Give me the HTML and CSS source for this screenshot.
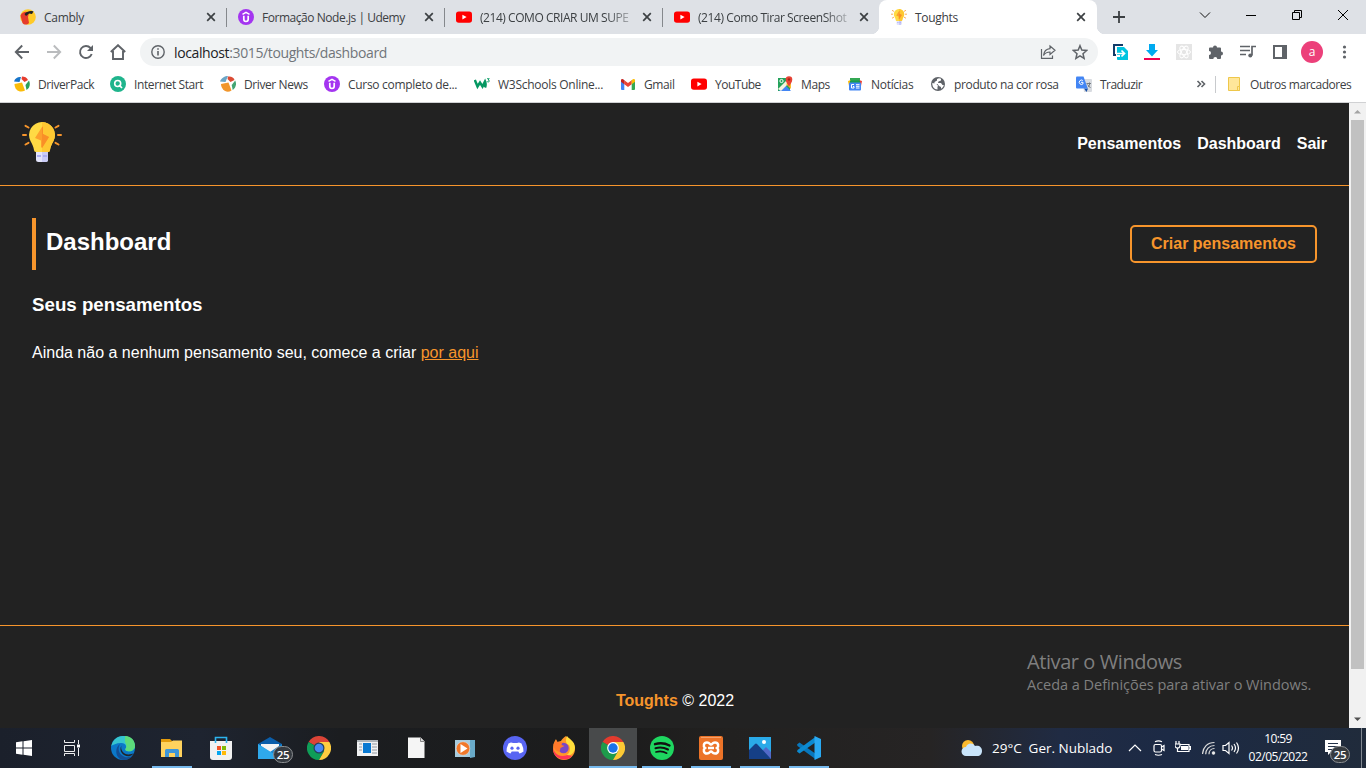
FILE: index.html
```html
<!DOCTYPE html>
<html lang="pt">
<head>
<meta charset="utf-8">
<title>Toughts</title>
<link rel="stylesheet" href="styles.css">
</head>
<body>
<svg class="defs" aria-hidden="true">
  <symbol id="x" viewBox="0 0 10 10"><path d="M1.200 1.200l7.600 7.600M8.800 1.200L1.200 8.800" stroke="#3c4043" stroke-width="1.700" fill="none"/></symbol>
  <symbol id="udemy" viewBox="0 0 16 16"><circle cx="8" cy="8" r="8" fill="#a435f0"/><path d="M4.500 5.300L8 3.300l3.500 2" fill="none" stroke="#fff" stroke-width="1.500"/><path d="M5.800 6.800v3.500a2.200 2.200 0 0 0 4.400 0V6.800" fill="none" stroke="#fff" stroke-width="1.700"/></symbol>
  <symbol id="yt" viewBox="0 0 16 16"><rect y="2.400" width="16" height="11.400" rx="2.800" fill="#f00"/><path d="M6.400 5.700v4.800l4.200-2.400z" fill="#fff"/></symbol>
  <symbol id="bulb" viewBox="0 0 40 40"><g stroke="#f7952c" stroke-width="2" stroke-linecap="round"><path d="M3.500 3.800l3 1.700M1 13h3M3.500 22.500l3-1.700M36.500 3.800l-3 1.700M39 13h-3M36.500 22.500l-3-1.700"/></g><path d="M20 0A12.900 13 0 0 0 8.500 19c2 3.500 3 6 3.500 9q0 2 2 2h12q2 0 2-2c.5-3 1.500-5.500 3.500-9A12.900 13 0 0 0 20 0z" fill="#ffda44"/><path d="M20 0v30h6q2 0 2-2c.5-3 1.500-5.500 3.500-9A12.900 13 0 0 0 20 0z" fill="#fec832"/><path d="M20 5l-7 11 6 2.500V25l1 1 7-11-6-3V5z" fill="#fda02c"/><path d="M20 5v21l7-11-6-3V4.500z" fill="#f98f27"/><path d="M14 30h12v7.500a2.500 2.500 0 0 1-2.500 2.500h-7a2.500 2.500 0 0 1-2.500-2.500z" fill="#e3e4fb"/><path d="M20 30h6v7.500a2.500 2.500 0 0 1-2.500 2.500H20z" fill="#c9cbf6"/><path d="M15 34h4M21 34h4" stroke="#acaef0" stroke-width="2"/></symbol>
  <symbol id="chrome" viewBox="0 0 24 24"><path d="M12 12L1.600 6A12 12 0 0 1 22.400 6z" fill="#e33b2e"/><path d="M12 12l5.200 3L12 24A12 12 0 0 1 1.600 6z" fill="#1e9b4b"/><path d="M12 6h10.400A12 12 0 0 1 12 24l5.200-9z" fill="#fcc934"/><circle cx="12" cy="12" r="5.900" fill="#fff"/><circle cx="12" cy="12" r="4.700" fill="#1a73e8"/></symbol>
  <symbol id="chrome-profile" viewBox="0 0 24 24"><path d="M12 12L1.600 6A12 12 0 0 1 22.400 6z" fill="#db4437"/><path d="M12 12l5.200 3L12 24A12 12 0 0 1 1.600 6z" fill="#0f9d58"/><path d="M12 6h10.400A12 12 0 0 1 12 24l5.200-9z" fill="#ffcd40"/><circle cx="12" cy="12" r="5.500" fill="#25405c"/><circle cx="12" cy="12" r="4.300" fill="#4687f4"/></symbol>
  <symbol id="pack" viewBox="0 0 16 16"><path d="M0 5.500C1 2 4 .5 7 1L5.500 6z" fill="#1875c9"/><path d="M8 .5c2.500 0 5 1 6 3.500L10.500 6 7.500 3z" fill="#e63c2e"/><path d="M15 4.500c1.500 3 1 7.500-2.500 9.500L11.500 9z" fill="#2ba05a"/><path d="M.5 8l7.500-1.500 3 8C6 17.500.5 14 .5 8z" fill="#fbbc09"/></symbol>
</svg>

<div class="screen">
  <header class="browser">
    <div class="tabs">
      <div class="tab">
        <svg class="fav" viewBox="0 0 16 16"><circle cx="8" cy="8" r="7.800" fill="#ffca28"/><path d="M.5 6.500c2-4 6-4.500 8.500-2.500l-1 4 1 6c-2 2-5 2-6.500 0z" fill="#e53b2b"/><path d="M4.500 5c3-3 6-3.500 9-2.500L12 5 9 4.500 6 7z" fill="#222"/></svg>
        <span class="tab-title">Cambly</span><svg class="close"><use href="#x"/></svg>
      </div>
      <div class="tab"><svg class="fav"><use href="#udemy"/></svg><span class="tab-title t-form">Formação Node.js | Udemy</span><svg class="close"><use href="#x"/></svg></div>
      <div class="tab"><svg class="fav"><use href="#yt"/></svg><span class="tab-title fade t-como">(214) COMO CRIAR UM SUPE</span><svg class="close"><use href="#x"/></svg></div>
      <div class="tab last"><svg class="fav"><use href="#yt"/></svg><span class="tab-title fade t-tirar">(214) Como Tirar ScreenShot</span><svg class="close"><use href="#x"/></svg></div>
      <div class="tab active"><svg class="fav"><use href="#bulb"/></svg><span class="tab-title">Toughts</span><svg class="close"><use href="#x"/></svg></div>
      <svg class="plus" viewBox="0 0 12 12"><path d="M6 0v12M0 6h12" stroke="#3c4043" stroke-width="1.800"/></svg>
      <div class="window-buttons">
        <svg viewBox="0 0 12 12"><path d="M1 3.500l5 5 5-5" fill="none" stroke="#111"/></svg>
        <svg viewBox="0 0 12 12"><path d="M1 6.500h10" stroke="#000"/></svg>
        <svg viewBox="0 0 12 12"><path d="M3.500 3.500v-2h7v7h-2M1.500 3.500h7v7h-7z" fill="none" stroke="#000"/></svg>
        <svg viewBox="0 0 12 12"><path d="M1 1l10 10M11 1L1 11" stroke="#000"/></svg>
      </div>
    </div>
    <div class="toolbar">
      <svg class="nav-icon" viewBox="0 0 16 16"><path d="M15 8H2M8.200 1.500L1.800 8l6.400 6.500" fill="none" stroke="#5f6368" stroke-width="1.900"/></svg>
      <svg class="nav-icon" viewBox="0 0 16 16"><path d="M1 8h13M7.800 1.500L14.200 8l-6.400 6.500" fill="none" stroke="#babcbe" stroke-width="1.900"/></svg>
      <svg class="nav-icon" viewBox="0 0 16 16"><path d="M13.700 10A6 6 0 1 1 12.500 4l1 1.300" fill="none" stroke="#5f6368" stroke-width="1.900"/><path d="M15 1v6H9z" fill="#5f6368"/></svg>
      <svg class="nav-icon" viewBox="0 0 16 16"><path d="M.8 8L8 1.200 15.200 8M3 7v8h10V7" fill="none" stroke="#5f6368" stroke-width="1.900"/></svg>
      <div class="address">
        <svg class="info" viewBox="0 0 14 14"><circle cx="7" cy="7" r="6.200" fill="none" stroke="#5f6368" stroke-width="1.400"/><path d="M7 6v4.500M7 3.300v1.500" stroke="#5f6368" stroke-width="1.600"/></svg>
        <span class="url"><b>localhost</b>:3015/toughts/dashboard</span>
        <svg class="share" viewBox="0 0 16 16"><path d="M1.500 5v9.300h11V11.500" fill="none" stroke="#5f6368" stroke-width="1.200"/><path d="M10 2l5 4.300-5 4.200V8C7 8 5 9 3.500 11.500 4 7.500 6 5 10 4.700z" fill="none" stroke="#5f6368" stroke-width="1.200"/></svg>
        <svg class="star" viewBox="0 0 16 16"><path d="M8 1.700l1.800 4.400 4.900.4-3.700 3.200 1.100 4.700L8 11.900l-4.100 2.500L5 9.700 1.300 6.500l4.900-.4z" fill="none" stroke="#5f6368" stroke-width="1.500"/></svg>
      </div>
      <div class="extensions">
        <svg viewBox="0 0 16 16"><path d="M11 1H2v10h2" fill="none" stroke="#123c69" stroke-width="2"/><path d="M5 3h7l4 4v9H6q-1 0-1-1v-2h3v-2H5z" fill="#00c4e0"/><path d="M5 9.500h7M9.500 6.500l3 3-3 3" fill="none" stroke="#fff" stroke-width="1.700"/></svg>
        <svg viewBox="0 0 16 16"><path d="M5 0h6v6h3l-6 6.500L2 6h3z" fill="#00aaf0"/><path d="M0 15h16" stroke="#f00050" stroke-width="2"/></svg>
        <svg viewBox="0 0 16 16"><path fill="#e5e5e5" d="M0 0h16v16H0z"/><g fill="none" stroke="#fff"><ellipse cx="8" cy="8" rx="6.500" ry="2.600"/><ellipse cx="8" cy="8" rx="6.500" ry="2.600" transform="rotate(60 8 8)"/><ellipse cx="8" cy="8" rx="6.500" ry="2.600" transform="rotate(120 8 8)"/></g></svg>
        <svg viewBox="0 0 16 16"><path d="M1 4.500q0-1 1-1h3a2 2 0 1 1 4 0h3q1 0 1 1v3a2 2 0 1 1 0 4V14q0 1-1 1H9.300a2 2 0 1 0-4 0H2q-1 0-1-1v-3a2 2 0 1 0 0-4z" fill="#5f6368"/></svg>
        <svg viewBox="0 0 16 16"><path d="M0 2.500h10M0 6.500h10M0 10.500h6M12 11.500v-9h4" fill="none" stroke="#5f6368" stroke-width="1.700"/><circle cx="10.300" cy="11.500" r="2" fill="#5f6368"/></svg>
        <svg viewBox="0 0 16 16"><path d="M1 1h14v14H1z" fill="#5f6368"/><path d="M3 3h7v10H3z" fill="#fff"/></svg>
        <span class="avatar">a</span>
        <svg viewBox="0 0 16 16"><g fill="#5f6368"><circle cx="8.500" cy="3" r="1.600"/><circle cx="8.500" cy="8" r="1.600"/><circle cx="8.500" cy="13" r="1.600"/></g></svg>
      </div>
    </div>
    <nav class="bookmarks">
      <span class="bm b1"><svg><use href="#pack"/></svg>DriverPack</span>
      <span class="bm b2"><svg viewBox="0 0 16 16"><circle cx="8" cy="8" r="8" fill="#1fb48c"/><circle cx="7.700" cy="7.500" r="3" fill="none" stroke="#fff" stroke-width="1.600"/><path d="M9 9l3 3" stroke="#fff" stroke-width="1.700"/></svg>Internet Start</span>
      <span class="bm b3"><svg viewBox="0 0 16 16"><path d="M0 5.500C1 2 5 0 8 0L5.500 6z" fill="#6aa5c6"/><path d="M8 .5c3-.5 6 1 6.500 3.500L10.500 6 7.500 3z" fill="#db4b34"/><path d="M15.200 4.500c2 4 0 8-2.500 9.500l-1-5z" fill="#43a574"/><path d="M1 8l7.500-1.500 3 8C6 18 1 13 1 8z" fill="#f1962c"/></svg>Driver News</span>
      <span class="bm b4"><svg><use href="#udemy"/></svg>Curso completo de...</span>
      <span class="bm b5"><svg viewBox="0 0 16 16"><path d="M.8 4l2.700 6.500L6 6.500l2.500 4L11 5.500c.8 2 .8 4 0 6" fill="none" stroke="#059862" stroke-width="2.500"/><path d="M13 2.700h2.300L14 4c1.800-.2 1.800 2 .2 2-.8 0-1.200-.3-1.300-.8" fill="none" stroke="#059862" stroke-width=".9"/></svg>W3Schools Online...</span>
      <span class="bm b6"><svg viewBox="0 0 16 16"><path d="M1 4h3.300v10H2q-1 0-1-1z" fill="#4285f4"/><path d="M11.700 4H15v9q0 1-1 1h-2.300z" fill="#34a853"/><path d="M4.300 4.200L8 7l3.700-2.800v4L8 11 4.300 8.200z" fill="#ea4335"/><path d="M1 4.500c0-2 1.800-2 3.300-.3v4L1 5.700z" fill="#c5221f"/><path d="M15 4.500c0-2-1.800-2-3.300-.3v4L15 5.700z" fill="#fbbc04"/></svg>Gmail</span>
      <span class="bm b7"><svg><use href="#yt"/></svg>YouTube</span>
      <span class="bm b8"><svg viewBox="0 0 16 16"><path d="M1 2h12v13H1z" fill="#24a25b"/><path d="M2 15l6-6 6 6z" fill="#4285f4"/><path d="M1 13L12 2l2 3L4 15z" fill="#f7f3df"/><path d="M9 8l5 5V5z" fill="#fbc02d"/><circle cx="4.500" cy="5" r="1.600" fill="none" stroke="#fff"/><path d="M12 11C11 8 8.700 6.500 8.700 3.500a3.300 3.300 0 0 1 6.600 0C15.300 6.500 13 8 12 11z" fill="#e64235"/><circle cx="12" cy="3.500" r="1.200" fill="#a52714"/></svg>Maps</span>
      <span class="bm b9"><svg viewBox="0 0 16 16"><path d="M3 2h10v6H3z" fill="#34a853"/><path d="M1 5l3-1v6H2z" fill="#fbbc04"/><path d="M12 4l3 1-1 5h-2z" fill="#ea4335"/><path d="M3 4.500h10V8H3z" fill="#169b50"/><rect x="2" y="6.500" width="12" height="8" rx="1" fill="#4285f4"/><path d="M7 8.500H4.500v3.500H7v-1.500H6M9 8.700h3.500M9 10.300h3.500M9 12h3.500" fill="none" stroke="#fff"/></svg>Notícias</span>
      <span class="bm b10"><svg viewBox="0 0 16 16"><circle cx="8" cy="8" r="7" fill="#5f6368"/><path d="M2.300 7l4 .8 1.700 2-.5 1.200v2.500C4 13.500 2 10 2.300 7zM9 2.300l2 .5v1.700L8.500 5.500 8 7h3l1.500 2h1.300c-.3 1.700-1.300 3-2.800 3.800V11l-2-1-1.500-2-3-.5V6L7 4.500V3z" fill="#fff"/></svg>produto na cor rosa</span>
      <span class="bm b11"><svg viewBox="0 0 16 16"><path d="M6 3h9q1 0 1 1v11q0 1-1 1H8z" fill="#d8dbe0"/><path d="M8 12.500h4L10.500 16z" fill="#174ea6"/><path d="M0 1.500Q0 .5 1 .5h6.500l4.300 12H1q-1 0-1-1z" fill="#4285f4"/><path d="M6.800 4.500A2.200 2.200 0 1 0 7 7.800V6.300H5" fill="none" stroke="#fff"/><path d="M10.500 7.500h4.500M13.500 6.500c.5 2-.5 4-1.500 4.500M11.500 8.500l3 3.500" fill="none" stroke="#6d747b" stroke-width=".9"/></svg>Traduzir</span>
      <svg class="more" viewBox="0 0 10 10"><path d="M1.500 2l3 3-3 3M5.500 2l3 3-3 3" fill="none" stroke="#5f6368" stroke-width="1.600"/></svg>
      <span class="bm others"><svg viewBox="0 0 16 16"><path d="M.5 1.500h11v13H.5z" fill="#ffe69a" stroke="#eec74a"/><path d="M9.500 10.500h2v4h-2z" fill="#ffe69a" stroke="#eec74a"/></svg>Outros marcadores</span>
    </nav>
  </header>

  <div class="viewport">
    <div class="page">
      <header class="site-header">
        <svg class="logo"><use href="#bulb"/></svg>
        <nav class="site-nav"><a>Pensamentos</a><a>Dashboard</a><a>Sair</a></nav>
      </header>
      <main class="content">
        <div class="title-row"><h1>Dashboard</h1><a class="create">Criar pensamentos</a></div>
        <h2>Seus pensamentos</h2>
        <p>Ainda não a nenhum pensamento seu, comece a criar <a class="link">por aqui</a></p>
      </main>
      <footer class="site-footer"><p><b>Toughts</b> © 2022</p></footer>
    </div>
    <div class="scrollbar">
      <svg viewBox="0 0 17 17"><path d="M5 10.500h7L8.500 7z" fill="#a3a3a3"/></svg>
      <div class="thumb"></div>
      <svg viewBox="0 0 17 17"><path d="M5 6.500h7L8.500 10z" fill="#505050"/></svg>
    </div>
    <div class="watermark"><div class="wm1">Ativar o Windows</div><div class="wm2">Aceda a Definições para ativar o Windows.</div></div>
  </div>

  <footer class="taskbar">
    <div class="start"><svg viewBox="0 0 24 24"><path d="M4 6.300l6.500-1v6.200H4zM11.500 5.200L20 4v7.500h-8.500zM4 12.500h6.500v6.200L4 17.700zM11.500 12.500H20V20l-8.500-1.200z" fill="#fff"/></svg></div>
    <div class="start view"><svg viewBox="0 0 24 24" fill="none" stroke="#eee"><path d="M4.500 4v2.500h10V4M4.500 9.500h10v6h-10zM4.500 20v-2.500h10V20M18.500 4v4M18.500 12v8"/><path d="M17 8.500h3v3h-3z" fill="#fff" stroke="none"/></svg></div>
    <div class="apps">
      <div class="app"><svg viewBox="0 0 24 24"><circle cx="12" cy="12" r="12" fill="#0b78c8"/><path d="M.3 10C2 3 7-.3 13 0c7 .5 11 5 11 10 0 4-4 6-8 5-2-.5-2-2-1-3 1-3-2-5-5-5-5 0-8 2-9.700 3z" fill="#36c5cf"/><path d="M14 0c7 .5 10 5 10 10 0 4-4 6-8 5-2-.5-2-2-1-3 1-2 0-4-1-6z" fill="#5cdb7b"/><path d="M9 8c-3 5-1 11 5 13 3 .5 6 0 8-2-3 5-9 6-13 4C4 20 4 11 9 8z" fill="#124e94"/><path d="M10.500 9.500c-1.500 4 2 9 7 9 2 0 4-.5 5.200-1.200-1 1.200-2 2.200-3.700 2.800-6 1.500-12-5-8.500-10.600z" fill="#20242a"/></svg></div>
      <div class="app open"><svg viewBox="0 0 24 24"><path d="M1 3h9l2 2h10v4H1z" fill="#e39b0c"/><path d="M1 6h10l2-1.500h9V21H1z" fill="#ffd25e"/><path d="M5 21v-6.500q0-1.500 1.500-1.500h11q1.500 0 1.500 1.500V21h-4v-4H9v4z" fill="#3e96d8"/></svg></div>
      <div class="app"><svg viewBox="0 0 24 24"><path d="M1 5h22v16q0 3-3 3H4q-3 0-3-3z" fill="#f1f1f1"/><path d="M6.500 7V1.500h11V7" stroke="#2cb4ef" stroke-width="1.600" fill="none"/><path d="M8 10h4v4H8z" fill="#f35325"/><path d="M13 10h4v4h-4z" fill="#81bc06"/><path d="M8 15h4v4H8z" fill="#05a6f0"/><path d="M13 15h4v4h-4z" fill="#ffba08"/></svg></div>
      <div class="app mail"><svg viewBox="0 0 24 24"><path d="M0 8L12 1l12 7v5H0z" fill="#0b5eaa"/><path d="M3 8h18v9H3z" fill="#f4f4f4"/><path d="M0 8l12 8 12-8v15H0z" fill="#1686d2"/><path d="M0 8v15h24z" fill="#2fa9ec"/></svg><span class="badge">25</span></div>
      <div class="app"><svg><use href="#chrome-profile"/></svg></div>
      <div class="app"><svg viewBox="0 0 24 24"><path d="M1 4h21v16H1z" fill="#f0f1f2"/><path d="M1 4h21v2H1z" fill="#adb3b8"/><path d="M7 7h8v10H7z" fill="#0878d1"/><path d="M3 8h3M3 11h3M3 14h3M16 8h5M16 11h5M16 14h5M16 17h5" stroke="#9298a0"/></svg></div>
      <div class="app"><svg viewBox="0 0 24 24"><path d="M3 1.500h12.500l4 4V22H3z" fill="#f5f5f5"/><path d="M15.500 1.500v4h4" fill="#ddd" stroke="#858585"/></svg></div>
      <div class="app"><svg viewBox="0 0 24 24"><path d="M1 4h18v17H1z" fill="#a8ccde"/><path d="M16 4h5v17l-5 1z" fill="#69aac8"/><circle cx="9" cy="12.500" r="6.800" fill="#f1782a" stroke="#ddd" stroke-width=".6"/><path d="M6.500 8v9l7-4.500z" fill="#fff"/></svg></div>
      <div class="app"><svg viewBox="0 0 24 24"><circle cx="12" cy="12" r="12" fill="#5865f2"/><path d="M8 6.500l2 .5h4l2-.5 2.500 1q2 4 2 8-2 1.500-4 2l-1.200-2H8.700l-1.200 2q-2-.5-4-2 0-4 2-8z" fill="#fff"/><circle cx="9" cy="12.200" r="1.600" fill="#5865f2"/><circle cx="15" cy="12.200" r="1.600" fill="#5865f2"/></svg></div>
      <div class="app"><svg viewBox="0 0 24 24"><path d="M14 0c3 3 9 6 9 13a11 11 0 0 1-22 0c0-4 1-7 3-10l1 3 4-1c1-2 3-4 5-5z" fill="#ff9729"/><path d="M15 0c3 4 8 5 8 12-1 6-5 8-10 8 5-2 6-7 4-11-3-1-4-4-2-9z" fill="#ffde3b"/><path d="M1 10c0 7 6 12 14 9l5 1A11 11 0 0 1 1 13z" fill="#ff3455"/><circle cx="11.500" cy="12" r="5.200" fill="#7847c6"/><path d="M1.500 8l3-4 1 2 5 0-1 3 3 1-4 2-1 4c-4-1-6-4-6-8z" fill="#ff792b"/></svg></div>
      <div class="app current"><svg><use href="#chrome"/></svg></div>
      <div class="app open"><svg viewBox="0 0 24 24"><circle cx="12" cy="12" r="12" fill="#1ed760"/><g fill="none" stroke="#111" stroke-linecap="round"><path d="M5 8.200c5-1.500 10-1 14.500 1.300" stroke-width="2.400"/><path d="M5.500 12.200c4.500-1.200 8.500-.7 12.500 1.300" stroke-width="2"/><path d="M6 16c4-1 7.500-.6 10.700 1.200" stroke-width="1.700"/></g></svg></div>
      <div class="app open"><svg viewBox="0 0 24 24"><rect width="24" height="24" rx="2" fill="#ec7328"/><path d="M2 1.500h20" stroke="#f4a16c"/><path d="M8 6.500c3 0 2.500 2 4 2s1-2 4-2c3.500 0 4 4 2 5.500 2 1.500 1.500 5.500-2 5.500-3 0-2.500-2-4-2s-1 2-4 2c-3.500 0-4-4-2-5.500-2-1.500-1.500-5.500 2-5.500zM9 12h6" fill="none" stroke="#fff" stroke-width="2.500"/></svg></div>
      <div class="app open"><svg viewBox="0 0 24 24"><path d="M1 1h22v22H1z" fill="#2aaae8"/><path d="M12 17l6-6 5 5v7H12z" fill="#5269c8"/><path d="M1 14l6-6q1-1 2 0l14 15H1z" fill="#153f86"/><circle cx="16" cy="6" r="2" fill="#fff"/></svg></div>
      <div class="app open"><svg viewBox="0 0 24 24"><path d="M0 8.500l2.500-2L19 18v5.500L.500 10z" fill="#0877bc"/><path d="M0 15.500l2.500 2L19 6V.5L.5 14z" fill="#0c8ad1"/><path d="M17.500 0L24 3v18l-6.500 3z" fill="#29a9f2"/></svg></div>
    </div>
    <div class="tray">
      <svg class="weather" viewBox="0 0 22 18"><circle cx="7" cy="7" r="6" fill="#fcb92c"/><path d="M5 17a4.500 4.500 0 0 1 0-9c1-4 7-5 9-1 4-1 7 1 7 5 0 3-2 5-4.500 5z" fill="#c9e4fa"/></svg>
      <span class="forecast">29°C&nbsp; Ger. Nublado</span>
      <svg class="chev" viewBox="0 0 14 16"><path d="M1 11l6-6 6 6" fill="none" stroke="#fff" stroke-width="1.200"/></svg>
      <svg class="meet" viewBox="0 0 16 16" fill="none" stroke="#fff" stroke-width="1.200"><rect x="3" y="4.500" width="7.500" height="7.500" rx="1.500"/><path d="M10.500 7L13 5.500v5L10.500 9M4 1.700q3.500-1.500 7 0M4 14.500q3.500 1.500 7 0"/></svg>
      <svg class="battery" viewBox="0 0 16 16"><path d="M5 4.500h9v7H4.500M14.500 6.500h1v3h-1M1 1v3M4 1v3M0 4h5v1.500a2.500 2.500 0 0 1-5 0zM2.500 8v3.500h2" fill="none" stroke="#fff" stroke-width="1.200"/><path d="M6 6h7v4H6z" fill="#fff"/></svg>
      <svg class="wifi" viewBox="0 0 14 16" fill="none" stroke="#ddd" stroke-width="1.200"><path d="M.5 14C1 7 5.500 2.500 12.500 2.500M3.700 14.200c0-4.700 3.300-8.700 8.800-8.700M7 14.200c0-3.200 2.200-5.700 5.500-5.700"/><circle cx="11.500" cy="13" r="1.200" fill="#fff"/></svg>
      <svg class="sound" viewBox="0 0 18 16" fill="none" stroke="#fff" stroke-width="1.200"><path d="M1 5.500h2.500L7 2.500v11l-3.500-3H1zM9.500 5.500q2 2.500 0 5M12 4q3 4 0 8M14.500 2.500q4 5.500 0 11"/></svg>
      <div class="clock"><span>10:59</span><span class="date">02/05/2022</span></div>
      <div class="notify"><svg viewBox="0 0 16 16"><path d="M0 0h16v12H6l-3 3v-3H0z" fill="#fff"/><path d="M3 3.500h10M3 6.500h10M3 9.500h6" stroke="#24334a"/></svg><span class="badge">25</span></div>
    </div>
  </footer>
</div>
</body>
</html>
```

FILE: styles.css
```css
* { box-sizing: border-box; }
body { margin: 0; font: 12px "Open Sans", "Noto Sans", sans-serif; color: #3c4043; }
svg { display: block; flex: none; }
.defs { position: absolute; width: 0; height: 0; }
.screen { width: 1366px; height: 768px; overflow: hidden; display: grid; grid-template-rows: 103px 625px 40px; }

/* Browser chrome */
.browser { background: #fff; border-bottom: 1px solid #d0d1d3; display: grid; grid-template-rows: 34px 36px 32px; }
.tabs { background: #dee1e6; display: flex; align-items: center; padding-left: 8px; }
.tab { width: 218px; height: 34px; display: flex; align-items: center; padding: 0 9px 0 12px; position: relative; flex: none; }
.tab::after { content: ""; position: absolute; right: -1px; top: 8px; width: 1px; height: 19px; background: #85888c; }
.tab.last::after, .tab.active::after { display: none; }
.tab.last { width: 217px; }
.fav { width: 16px; height: 16px; margin-right: 8px; }
.tab-title { flex: none; width: 154px; white-space: nowrap; letter-spacing: -.3px; }
.last .tab-title, .active .tab-title { width: 153px; }
.t-form { letter-spacing: -.46px; }
.t-como { letter-spacing: -.45px; }
.t-tirar { letter-spacing: -.42px; }
.fade { -webkit-mask-image: linear-gradient(90deg, #000 82%, #0003); mask-image: linear-gradient(90deg, #000 82%, #0003); }
.close { width: 10px; height: 10px; margin-left: 8px; }
.tab.active { background: #fff; border-radius: 8px 8px 0 0; }
.tab.active::before { content: ""; position: absolute; left: -8px; right: -8px; bottom: 0; height: 8px; background: radial-gradient(circle at 0 0, transparent 8px, #fff 8.500px) left / 8px 8px no-repeat, radial-gradient(circle at 100% 0, transparent 8px, #fff 8.500px) right / 8px 8px no-repeat; }
.plus { width: 12px; height: 12px; margin-left: 16px; }
.window-buttons { display: flex; gap: 34px; margin: 0 17px 5px auto; }
.window-buttons svg { width: 12px; height: 12px; }

.toolbar { display: flex; align-items: center; padding-left: 14px; }
.nav-icon { width: 16px; height: 16px; margin-right: 16px; }
.address { width: 958px; height: 28px; margin-left: -2px; border-radius: 14px; background: #f1f3f4; display: flex; align-items: center; padding: 0 10px 0 11px; }
.info { width: 14px; height: 14px; margin-right: 9px; }
.url { font-size: 14px; letter-spacing: -.38px; color: #70757a; flex: 1; }
.url b { font-weight: 400; color: #202124; }
.share { width: 16px; height: 16px; margin-right: 16px; }
.star { width: 16px; height: 16px; }
.extensions { display: flex; align-items: center; gap: 16px; margin-left: 14px; }
.extensions svg { width: 16px; height: 16px; }
.avatar { width: 22px; height: 22px; margin: 0 -3px; border-radius: 50%; background: #ec407a; color: #fff; display: grid; place-items: center; line-height: 20px; }

.bookmarks { display: flex; align-items: center; padding: 0 0 4px 14px; }
.bm { display: flex; align-items: center; gap: 8px; white-space: nowrap; letter-spacing: -.4px; flex: none; }
.bm svg { width: 16px; height: 16px; }
.b1 { width: 96px; }
.b2 { width: 110px; }
.b3 { width: 104px; }
.b4 { width: 150px; letter-spacing: -.3px; }
.b5 { width: 146px; letter-spacing: -.27px; }
.b6 { width: 71px; letter-spacing: -.4px; }
.b7 { width: 86px; letter-spacing: -.5px; }
.b8 { width: 70px; }
.b9 { width: 83px; letter-spacing: -.3px; }
.b10 { width: 146px; letter-spacing: -.36px; }
.b11 { width: 120px; letter-spacing: -.55px; }
.more { width: 10px; height: 10px; }
.others { margin-left: 9px; padding-left: 12px; gap: 6px; border-left: 1px solid #c8cacd; letter-spacing: -.45px; }

/* Page */
.viewport { position: relative; display: grid; grid-template-columns: 1349px 17px; background: #222; }
.page { display: flex; flex-direction: column; background: #222; color: #fff; font: 16px/18px "Liberation Sans", Arial, sans-serif; }
.site-header { height: 83px; border-bottom: 1px solid #f7952c; display: flex; justify-content: space-between; padding: 19px 22px 0; }
.logo { width: 40px; height: 40px; }
.site-nav { display: flex; gap: 16px; padding-top: 13px; font-weight: 700; }
.content { padding: 32px; flex: 1; }
.title-row { display: flex; justify-content: space-between; align-items: center; height: 52px; }
h1 { margin: 0; height: 52px; border-left: 4px solid #f7952c; padding-left: 10px; font-size: 24px; line-height: 48px; }
.create { width: 187px; height: 38px; border: 2px solid #f7952c; border-radius: 5px; color: #f7952c; font-weight: 700; text-align: center; line-height: 33px; }
h2 { font-size: 18.720px; line-height: 22px; margin: 24px 0 28px; }
.content p { margin: 0; }
.link { color: #f7952c; text-decoration: underline; }
.site-footer { height: 103px; border-top: 1px solid #f7952c; text-align: center; }
.site-footer p { margin: 66px 0 0 1px; }
.site-footer b { color: #f7952c; }
.scrollbar { background: #f1f1f1; }
.scrollbar svg { width: 17px; height: 17px; }
.thumb { width: 13px; height: 549px; margin: 0 2px 42px; background: #c1c1c1; }
.watermark { position: absolute; left: 1027px; top: 545px; color: #7f7f7f; white-space: nowrap; }
.wm1 { font-size: 20px; line-height: 27px; letter-spacing: -.42px; }
.wm2 { font-size: 14.500px; line-height: 19px; letter-spacing: -.03px; }

/* Taskbar */
.taskbar { display: flex; color: #fff; background: linear-gradient(90deg, #1b202b 0, #1e2430 200px, #1b1d20 340px, #1c1c1c 620px, #222120 730px, #262424 930px, #202b43 1060px, #1c2a45 1170px, #202b3b 1366px); }
.start { width: 48px; display: grid; place-items: center; }
.start svg { width: 24px; height: 24px; }
.apps { display: flex; gap: 1px; margin-left: 3px; }
.app { width: 48px; height: 40px; padding: 8px 12px; position: relative; }
.app svg { width: 24px; height: 24px; }
.open::after, .current::after { content: ""; position: absolute; left: 4px; right: 4px; bottom: 0; height: 2px; background: #76b9ed; }
.current { background: #484a4b; }
.current::after { left: 0; right: 0; }
.badge { position: absolute; width: 20px; height: 17px; border: 1px solid #8b8e91; border-radius: 9px; background: #353a40; color: #fff; font-size: 11.500px; font-weight: 600; line-height: 15px; text-align: center; letter-spacing: -.3px; }
.mail .badge { left: 27px; top: 18px; }
.tray { display: flex; align-items: center; margin-left: auto; }
.tray svg { height: 16px; }
.tray .weather { width: 22px; height: 18px; margin-right: 9px; }
.forecast { width: 136px; font-size: 13.500px; white-space: nowrap; letter-spacing: -.02px; }
.chev { width: 14px; margin-right: 9px; }
.meet { width: 16px; margin-right: 8px; }
.battery { width: 16px; margin-right: 11px; }
.wifi { width: 14px; margin-right: 6px; }
.sound { width: 18px; margin-right: 8px; }
.clock { width: 60px; display: flex; flex-direction: column; align-items: center; line-height: 18px; letter-spacing: -.6px; }
.date { letter-spacing: -.47px; }
.notify { width: 54px; height: 40px; position: relative; padding: 12px 0 0 17px; border-right: 1px solid #818891; margin-right: 4px; }
.notify svg { width: 16px; height: 16px; }
.notify .badge { left: 22px; top: 18px; }
```
